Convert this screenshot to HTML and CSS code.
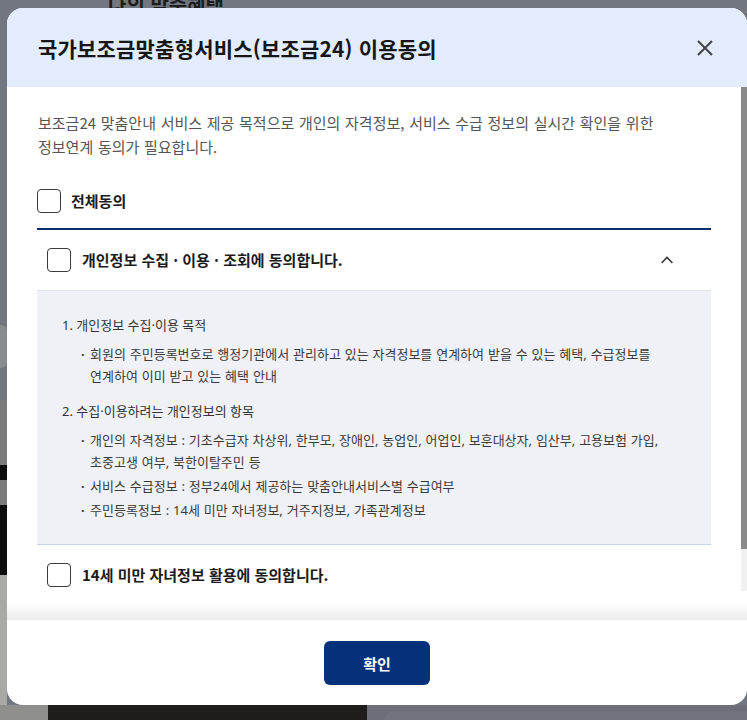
FILE: index.html
```html
<!DOCTYPE html>
<html lang="ko">
<head>
<meta charset="utf-8">
<title>이용동의</title>
<link rel="stylesheet" href="styles.css">
</head>
<body>
<div class="page">
  <div class="page-top">
    <h1 class="page-title">나의 맞춤혜택</h1>
  </div>
  <div class="page-side">
    <div class="seg seg-gray seg-1"></div>
    <div class="seg seg-box"></div>
    <div class="seg seg-gray seg-3"></div>
    <div class="seg seg-mid seg-4"></div>
    <div class="seg seg-black seg-5"></div>
    <div class="seg seg-mid seg-6"></div>
    <div class="seg seg-black seg-7"></div>
    <div class="seg seg-doc"></div>
  </div>
  <div class="page-bottom">
    <div class="thumb thumb-a"></div>
    <div class="thumb thumb-b"></div>
    <div class="thumb thumb-c"><span class="thumb-pill"></span></div>
  </div>
</div>

<div class="modal" role="dialog" aria-labelledby="modal-title">
  <header class="modal-head">
    <h2 id="modal-title" class="modal-title">국가보조금맞춤형서비스(보조금24) 이용동의</h2>
    <button class="close-btn" type="button" aria-label="닫기">
      <svg width="16" height="16" viewBox="0 0 16 16" aria-hidden="true">
        <path d="M1 1L15 15M15 1L1 15" stroke="#444" stroke-width="2" fill="none"/>
      </svg>
    </button>
  </header>

  <div class="modal-body">
    <div class="body-content">
      <p class="desc">보조금24 맞춤안내 서비스 제공 목적으로 개인의 자격정보, 서비스 수급 정보의 실시간 확인을 위한<br>정보연계 동의가 필요합니다.</p>

      <div class="check-all">
        <span class="box"></span>
        <span class="check-all-label">전체동의</span>
      </div>

      <div class="agree-item">
        <div class="agree-row">
          <span class="box"></span>
          <span class="agree-label">개인정보 수집 · 이용 · 조회에 동의합니다.</span>
          <svg class="chevron" width="12" height="8" viewBox="0 0 12 8" aria-hidden="true">
            <path d="M0.6 7L6 1.4L11.4 7" stroke="#333" stroke-width="1.5" fill="none"/>
          </svg>
        </div>
        <div class="agree-panel">
          <ol class="terms">
            <li class="term">
              <p class="term-title">1. 개인정보 수집·이용 목적</p>
              <ul class="term-list">
                <li>회원의 주민등록번호로 행정기관에서 관리하고 있는 자격정보를 연계하여 받을 수 있는 혜택, 수급정보를 연계하여 이미 받고 있는 혜택 안내</li>
              </ul>
            </li>
            <li class="term">
              <p class="term-title">2. 수집·이용하려는 개인정보의 항목</p>
              <ul class="term-list">
                <li>개인의 자격정보 : 기초수급자 차상위, 한부모, 장애인, 농업인, 어업인, 보훈대상자, 임산부, 고용보험 가입, 초중고생 여부, 북한이탈주민 등</li>
                <li>서비스 수급정보 : 정부24에서 제공하는 맞춤안내서비스별 수급여부</li>
                <li>주민등록정보 : 14세 미만 자녀정보, 거주지정보, 가족관계정보</li>
              </ul>
            </li>
          </ol>
        </div>
      </div>

      <div class="agree-item">
        <div class="agree-row">
          <span class="box"></span>
          <span class="agree-label">14세 미만 자녀정보 활용에 동의합니다.</span>
        </div>
      </div>
    </div>
    <div class="scrollbar" aria-hidden="true"><div class="scrollbar-thumb"></div></div>
  </div>

  <div class="modal-fade"></div>

  <footer class="modal-foot">
    <button class="confirm-btn" type="button">확인</button>
  </footer>
</div>
</body>
</html>
```

FILE: styles.css
```css
* { box-sizing: border-box; }

html, body {
  margin: 0;
  padding: 0;
  height: 100%;
}

body {
  font-family: "Noto Sans CJK KR", "Noto Sans", sans-serif;
  background: #72767e;
  overflow: hidden;
  word-break: keep-all;
}

/* background page (under dim overlay) */
.page {
  height: 720px;
  display: grid;
  grid-template-columns: 7px 1fr;
  grid-template-rows: 8px 697px 15px;
}

.page-top {
  grid-column: 1 / -1;
  display: flex;
  align-items: flex-end;
}

.page-title {
  margin: 0 0 -9px 108px;
  font-size: 20px;
  font-weight: 700;
  color: #1d1d1f;
  line-height: 24px;
  white-space: nowrap;
}

.page-side {
  grid-column: 1;
  grid-row: 2;
  display: flex;
  flex-direction: column;
}

.seg { flex: none; }
.seg-gray { background: #72767e; }
.seg-box { height: 43px; background: #8a8b8c; border-radius: 0 6px 6px 0; }
.seg-mid { background: #7b7b7c; }
.seg-black { background: #0d0d0d; }
.seg-doc { flex: 1; background: #a8a9a6; }
.seg-1 { height: 317px; }
.seg-3 { height: 32px; }
.seg-4 { height: 65px; }
.seg-5 { height: 15px; }
.seg-6 { height: 25px; }
.seg-7 { height: 70px; }

.page-bottom {
  grid-column: 1 / -1;
  grid-row: 3;
  display: flex;
}

.thumb-a { width: 48px; background: #8f908d; }
.thumb-b { width: 319px; background: #1e1d1c; }
.thumb-c {
  flex: 1;
  background: #6c6f78;
  padding: 6px 0 0 18px;
}
.thumb-pill {
  display: block;
  height: 9px;
  border-radius: 14px 0 0 0;
  background: #71747d;
}

/* modal */
.modal {
  position: fixed;
  left: 7px;
  top: 8px;
  width: 740px;
  height: 697px;
  background: #fff;
  border-radius: 16px;
  overflow: hidden;
  display: flex;
  flex-direction: column;
}

.modal-head {
  height: 79px;
  flex: none;
  background: #e2ecfd;
  display: flex;
  align-items: center;
  justify-content: space-between;
  padding: 0 30px 0 31px;
}

.modal-title {
  margin: 0;
  font-size: 21px;
  font-weight: 700;
  color: #161616;
  letter-spacing: 0.2px;
  line-height: 28px;
}

.close-btn {
  width: 24px;
  height: 24px;
  padding: 0;
  border: 0;
  background: none;
  display: flex;
  align-items: center;
  justify-content: center;
}

.modal-body {
  height: 504px;
  flex: none;
  display: flex;
}

.body-content {
  flex: 1;
  min-width: 0;
  overflow: hidden;
  padding: 24px 30px 30px 30px;
}

.scrollbar {
  flex: none;
  width: 6px;
  background: #f1f1f1;
}

.scrollbar-thumb {
  height: 462px;
  background: #8a8a8a;
}

.desc {
  margin: 0 0 30px;
  padding-left: 1px;
  font-size: 15px;
  line-height: 24px;
  color: #555;
  letter-spacing: 0;
  word-spacing: 0.5px;
}

.box {
  flex: none;
  width: 24px;
  height: 24px;
  border: 1.5px solid #3a3a3a;
  border-radius: 4px;
  background: #fff;
}

.check-all {
  display: flex;
  align-items: center;
  gap: 10px;
  padding-bottom: 15px;
  border-bottom: 2px solid #0b2e6c;
}

.check-all-label,
.agree-label {
  font-size: 15px;
  font-weight: 700;
  color: #1b1b1b;
  letter-spacing: 0;
  line-height: 24px;
}

.agree-row {
  display: flex;
  align-items: center;
  gap: 11px;
  padding: 18px 38px 18px 10px;
}

.agree-row .chevron { margin-left: auto; }

.agree-panel {
  background: #eff1f6;
  border-top: 1px solid #e2e4ea;
  border-bottom: 1px solid #c8d4ea;
  padding: 23px 25px 23px;
}

.terms,
.term-list {
  list-style: none;
  margin: 0;
  padding: 0;
}

.term + .term { margin-top: 13px; }

.term-title,
.term-list li {
  margin: 0;
  font-family: "Noto Sans", "Noto Sans CJK KR", sans-serif;
  font-size: 13px;
  line-height: 22px;
  color: #333;
  letter-spacing: 0;
}

.term-list { margin-top: 7px; }

.term-list li {
  position: relative;
  padding-left: 28px;
  color: #3a3a3a;
  word-spacing: 0.5px;
}

.term-list li + li { margin-top: 2px; }

.term-list li::before {
  content: "·";
  position: absolute;
  left: 19px;
  top: 0;
  font-weight: 700;
}

.modal-fade {
  height: 29px;
  flex: none;
  background: linear-gradient(to bottom, rgba(255,255,255,0) 0%, rgba(255,255,255,0) 35%, rgba(0,0,0,0.075) 100%);
}

.modal-foot {
  flex: 1;
  display: flex;
  justify-content: center;
  padding: 21px 0 20px;
}

.confirm-btn {
  width: 106px;
  height: 44px;
  border: 0;
  border-radius: 6px;
  background: #04317a;
  color: #fff;
  font-family: inherit;
  font-size: 15px;
  font-weight: 700;
}
```
